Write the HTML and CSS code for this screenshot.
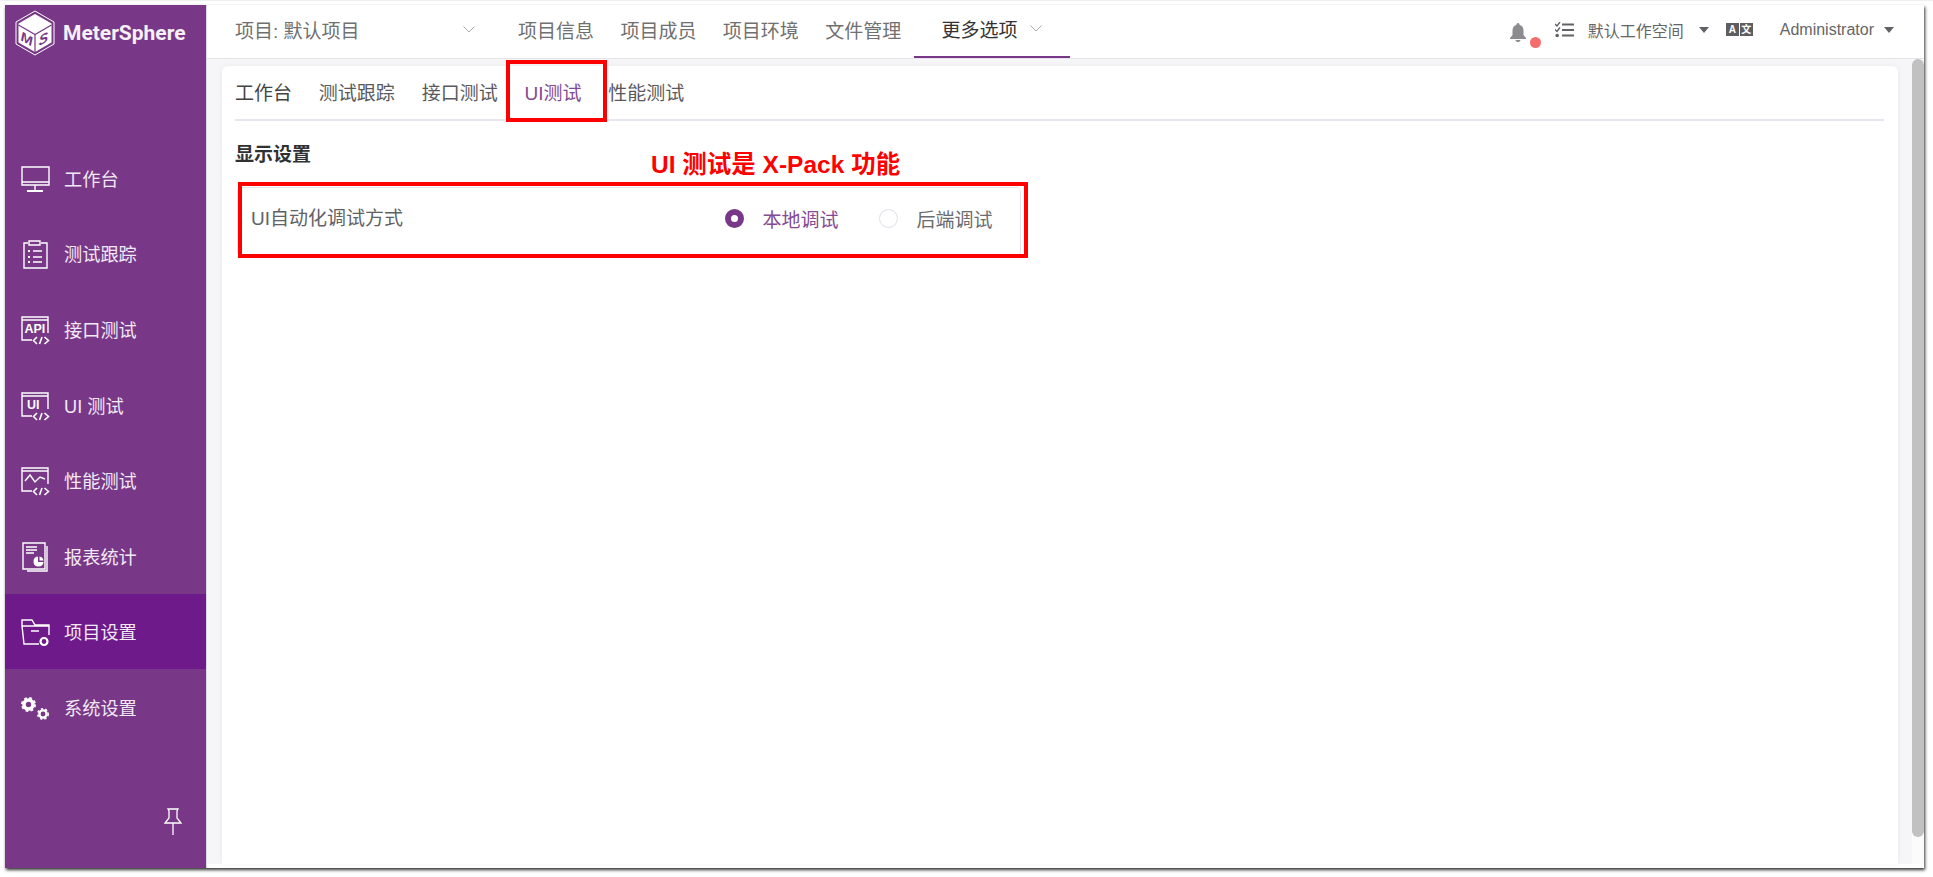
FILE: index.html
```html
<!DOCTYPE html>
<html lang="en">
<head>
    <meta charset="UTF-8">
    <meta name="viewport" content="width=device-width, initial-scale=1.0">
    <title>MeterSphere</title>
    <link rel="stylesheet" href="styles.css">
</head>
<body>
    <div class="window">
        <aside class="sidebar">
            <div class="logo">
                <svg class="logo-mark" viewBox="0 0 40 46" width="40" height="46">
                    <path d="M20 1 39 12V34L20 45 1 34V12Z" fill="none" stroke="#fff" stroke-width="1"/>
                    <path d="M20 4 36.500 13.500V32.500L20 42 3.500 32.500V13.500Z" fill="#fff"/>
                    <path d="M3.500 15 20 24.500 36.500 15M20 24.500V42" fill="none" stroke="#783887" stroke-width="1.200"/>
                    <text transform="translate(11.700 33.500) skewY(30)" text-anchor="middle" class="logo-letter">M</text>
                    <text transform="translate(28.300 33.500) skewY(-30)" text-anchor="middle" class="logo-letter">S</text>
                </svg>
                <span class="logo-name">MeterSphere</span>
            </div>
            <nav class="side-nav">
                <a class="side-item">
                    <svg class="side-icon" viewBox="0 0 28 28"><path d="M1 3H28V21H1ZM1 18H28M14 21V26"/><path stroke-width="2" d="M6 27H22"/></svg>
                    <span>工作台</span>
                </a>
                <a class="side-item">
                    <svg class="side-icon" viewBox="0 0 28 28"><path d="M7 4H3V29H26V4H20M8 2H19V6H8ZM12 12H21M12 18H21M12 23H21"/><path stroke-width="2" d="M7 12H9M7 18H9M7 23H9"/></svg>
                    <span>测试跟踪</span>
                </a>
                <a class="side-item">
                    <svg class="side-icon" viewBox="0 0 28 28"><path d="M11 25H1V2H27V18M1 5H27"/><path stroke-width="1.600" d="M16 22 12.500 25.500 16 29M21 22 18.500 29M23.500 22 27.500 25.500 23.500 29"/><text x="3.500" y="18" class="icon-text">API</text></svg>
                    <span>接口测试</span>
                </a>
                <a class="side-item">
                    <svg class="side-icon" viewBox="0 0 28 28"><path d="M11 25H1V2H27V18M1 5H27"/><path stroke-width="1.600" d="M16 22 12.500 25.500 16 29M21 22 18.500 29M23.500 22 27.500 25.500 23.500 29"/><text x="6" y="18" class="icon-text">UI</text></svg>
                    <span>UI 测试</span>
                </a>
                <a class="side-item">
                    <svg class="side-icon" viewBox="0 0 28 28"><path d="M11 25H1V2H27V18M1 5H27M4 15 9 9 14 16 19 11 24 13"/><path stroke-width="1.600" d="M16 22 12.500 25.500 16 29M21 22 18.500 29M23.500 22 27.500 25.500 23.500 29"/></svg>
                    <span>性能测试</span>
                </a>
                <a class="side-item">
                    <svg class="side-icon" viewBox="0 0 28 28"><path d="M2 1H24V27H2ZM26 4V29H6M5 5H16M5 8H16M5 11H13"/><path class="solid" d="M17 14.500A5 5 0 1 0 22.500 20H17Z"/><path class="solid" d="M18.500 14.500A5 5 0 0 1 22.500 18.500H18.500Z"/></svg>
                    <span>报表统计</span>
                </a>
                <a class="side-item active">
                    <svg class="side-icon" viewBox="0 0 28 28"><path d="M18 27H3L1 9V3H11L14 8H28V18M1 9H28M10 14H18"/><circle cx="23" cy="24.500" r="3.500" stroke-width="2.200"/></svg>
                    <span>项目设置</span>
                </a>
                <a class="side-item">
                    <svg class="side-icon" viewBox="0 0 28 28">
                        <circle cx="7.500" cy="11.500" r="4.500" stroke-width="3.600"/>
                        <circle cx="7.500" cy="11.500" r="6.500" stroke-width="2" stroke-dasharray="2.700 2.400"/>
                        <circle cx="22" cy="21" r="3.600" stroke-width="2.400"/>
                        <circle cx="22" cy="21" r="5.200" stroke-width="1.600" stroke-dasharray="2.200 2.150"/>
                    </svg>
                    <span>系统设置</span>
                </a>
            </nav>
            <div class="pin">
                <svg viewBox="0 0 18 28" width="18" height="28"><path d="M4 1H14L13 3V10L17 15H1L5 10V3ZM9 15V27" fill="none" stroke="#fff" stroke-width="1.300"/></svg>
            </div>
        </aside>

        <div class="main">
            <header class="topbar">
                <div class="project-select">
                    <span>项目: 默认项目</span>
                    <svg class="chevron" viewBox="0 0 12 7" width="12" height="7"><path d="M.5.500 6 6 11.500.500"/></svg>
                </div>
                <nav class="top-nav">
                    <a class="top-link">项目信息</a>
                    <a class="top-link">项目成员</a>
                    <a class="top-link">项目环境</a>
                    <a class="top-link">文件管理</a>
                    <a class="top-link current">更多选项
                        <svg class="chevron" viewBox="0 0 12 7" width="12" height="7"><path d="M.5.500 6 6 11.500.500"/></svg>
                    </a>
                </nav>
                <div class="top-right">
                    <span class="bell">
                        <svg viewBox="0 0 16 20" width="16" height="20"><path fill="#8c8c90" d="M8 0C9 0 9.500.700 9.500 1.800 12.500 2.600 13.500 5 13.500 8V12L16 15V16H0V15L2.500 12V8C2.500 5 3.500 2.600 6.500 1.800 6.500.700 7 0 8 0ZM5.500 17H10.500C10.300 18.500 9.300 19 8 19S5.700 18.500 5.500 17Z"/></svg>
                        <i class="bell-dot"></i>
                    </span>
                    <svg class="todo-icon" viewBox="0 0 19 16" width="19" height="16"><path d="M7 2.500H19M7 8H19M7 13.500H19" stroke="#606266" stroke-width="2"/><path d="M0 2 2 4 5 0M0 7.500 2 9.500 5 5.500" fill="none" stroke="#606266" stroke-width="1.400"/><circle cx="2.200" cy="13.500" r="1.800" fill="#606266"/></svg>
                    <span class="workspace">默认工作空间<i class="caret"></i></span>
                    <span class="lang">
                        <b>A</b><b>文</b>
                    </span>
                    <span class="user">Administrator<i class="caret"></i></span>
                </div>
            </header>

            <div class="body-row">
                <section class="card">
                    <div class="tabs">
                        <a class="tab">工作台</a>
                        <a class="tab">测试跟踪</a>
                        <a class="tab">接口测试</a>
                        <a class="tab active">UI测试</a>
                        <a class="tab">性能测试</a>
                    </div>
                    <h3 class="section-title">显示设置</h3>
                    <div class="setting-row">
                        <span class="setting-label">UI自动化调试方式</span>
                        <div class="radios">
                            <label class="radio checked"><i></i>本地调试</label>
                            <label class="radio"><i></i>后端调试</label>
                        </div>
                    </div>
                    <!-- annotations drawn on top of the screenshot -->
                    <div class="mark mark-tab"></div>
                    <div class="mark mark-row"></div>
                    <div class="mark-text">UI 测试是 X-Pack 功能</div>
                </section>
                <div class="scroll-track"><div class="scroll-thumb"></div></div>
            </div>
        </div>
    </div>
</body>
</html>
```

FILE: styles.css
```css
* {
    box-sizing: border-box;
}
html, body {
    height: 100%;
}
body {
    margin: 0;
    padding: 4px 9px 9px 5px;
    border-top: 1px solid #efeff1;
    background-color: white;
    overflow: hidden;
    font-family: "Liberation Sans", "Noto Sans CJK SC", sans-serif;
    font-size: 19px;
    color: #606266;
}
.window {
    display: flex;
    height: 863px;
    background: white;
    box-shadow: 1px 2px 3px rgba(0, 0, 0, 0.8);
}

/* sidebar */
.sidebar {
    position: relative;
    width: 202px;
    flex-shrink: 0;
    background-color: #783887;
    border-right: 1px solid #d9d9e6;
    color: white;
}
.logo {
    height: 135px;
    padding: 5px 0 0 10px;
    display: flex;
    align-items: flex-start;
    gap: 8px;
}
.logo-letter {
    font-family: "Liberation Sans", sans-serif;
    font-weight: bold;
    font-style: italic;
    font-size: 14px;
    fill: #783887;
}
.logo-name {
    margin-top: 11px;
    font-family: "Roboto", sans-serif;
    font-weight: bold;
    font-size: 21px;
    line-height: 24px;
    color: #f7f0f8;
}
.side-item {
    height: 75.600px;
    padding-left: 16px;
    display: flex;
    align-items: center;
    gap: 15px;
    font-size: 18.200px;
    color: #f3e9f5;
}
.side-item.active {
    background-color: #6e1a8a;
}
.side-icon {
    width: 28px;
    height: 28px;
    flex-shrink: 0;
    overflow: visible;
    fill: none;
    stroke: white;
    stroke-width: 1.400;
}
.side-icon .solid {
    fill: white;
    stroke: none;
}
.icon-text {
    font-family: "Liberation Sans", sans-serif;
    font-weight: bold;
    font-size: 12.500px;
    fill: white;
    stroke: none;
}
.pin {
    position: absolute;
    left: 159px;
    bottom: 32px;
    line-height: 0;
}

/* top bar */
.main {
    flex: 1;
    min-width: 0;
    display: flex;
    flex-direction: column;
}
.topbar {
    height: 54px;
    flex-shrink: 0;
    display: flex;
    border-bottom: 1px solid #e4e4ea;
}
.project-select {
    width: 311px;
    padding: 0 43px 4px 28px;
    display: flex;
    align-items: center;
    justify-content: space-between;
    color: #707070;
}
.chevron {
    fill: none;
    stroke: #a8abb2;
    stroke-width: 1;
}
.top-nav {
    display: flex;
}
.top-link {
    padding: 0 26.400px 4px 0;
    display: flex;
    align-items: center;
    color: #707070;
}
.top-link:nth-child(4) {
    padding-right: 13.200px;
}
.top-link.current {
    width: 156px;
    padding: 0 0 4px 27px;
    gap: 13px;
    color: #333;
    border-bottom: 2px solid #783887;
}
.top-right {
    margin-left: auto;
    padding-right: 30px;
    display: flex;
    align-items: center;
    font-size: 16px;
}
.bell {
    position: relative;
    display: flex;
    margin-right: 29px;
    margin-top: 3px;
}
.bell-dot {
    position: absolute;
    left: 20px;
    top: 14px;
    width: 11px;
    height: 11px;
    border-radius: 50%;
    background-color: #f56c6c;
}
.todo-icon {
    margin-right: 14px;
    margin-top: -4px;
}
.workspace, .user {
    display: flex;
    align-items: center;
    margin-top: -4px;
    color: #666;
}
.user {
    margin-top: -3px;
}
.caret {
    margin-left: 15px;
    border-left: 5px solid transparent;
    border-right: 5px solid transparent;
    border-top: 6px solid #606266;
}
.user .caret {
    margin-left: 10px;
}
.lang {
    display: flex;
    gap: 1px;
    margin: -4px 27px 0 17px;
}
.lang b {
    width: 13px;
    height: 13px;
    background-color: #5e5e62;
    color: white;
    font-size: 10px;
    line-height: 13px;
    text-align: center;
}

/* content */
.body-row {
    flex: 1;
    min-height: 0;
    display: flex;
    margin-bottom: 4px;
    background-color: #f6f6f8;
}
.card {
    position: relative;
    flex: 1;
    margin: 7px 14px 0 15px;
    padding: 0 14px 0 13px;
    background: white;
    border-radius: 6px 6px 0 0;
    box-shadow: 0 0 6px rgba(0, 0, 0, 0.05);
}
.tabs {
    height: 55px;
    padding-bottom: 3px;
    display: flex;
    align-items: center;
    gap: 26.800px;
    border-bottom: 2px solid #e4e7ed;
}
.tab {
    color: #5a5a5e;
}
.tab:first-child {
    color: #444;
}
.tab.active {
    color: #844a92;
}
.section-title {
    margin: 21px 0 0;
    font-size: 19px;
    line-height: 26px;
    color: #303133;
}
.setting-row {
    width: 784px;
    height: 69px;
    margin: 19px 0 0 2px;
    padding: 0 0 7px 13px;
    display: flex;
    align-items: center;
    justify-content: space-between;
    border: 1px solid #e4e4ee;
    border-radius: 4px;
}
.setting-label {
    padding-bottom: 3px;
}
.radios {
    display: flex;
    gap: 41px;
    padding-right: 27.500px;
}
.radio {
    display: flex;
    align-items: center;
    gap: 18px;
    color: #6a6c70;
}
.radio i {
    width: 19px;
    height: 19px;
    border: 1px solid #dcdfe6;
    border-radius: 50%;
}
.radio.checked {
    color: #844a92;
}
.radio.checked i {
    border: 6.500px solid #783887;
}

/* red annotations */
.mark {
    position: absolute;
    border: 4px solid #f00;
}
.mark-tab {
    left: 284px;
    top: -6px;
    width: 101px;
    height: 62px;
}
.mark-row {
    left: 16px;
    top: 116px;
    width: 790px;
    height: 76px;
}
.mark-text {
    position: absolute;
    left: 429px;
    top: 84px;
    font-size: 24.500px;
    line-height: 30px;
    font-weight: bold;
    color: #f00;
    white-space: nowrap;
}

.scroll-track {
    width: 12px;
    flex-shrink: 0;
    background-color: #fbfbfb;
}
.scroll-thumb {
    height: 778px;
    border-radius: 6px;
    background-color: #c1c1c1;
}
```
